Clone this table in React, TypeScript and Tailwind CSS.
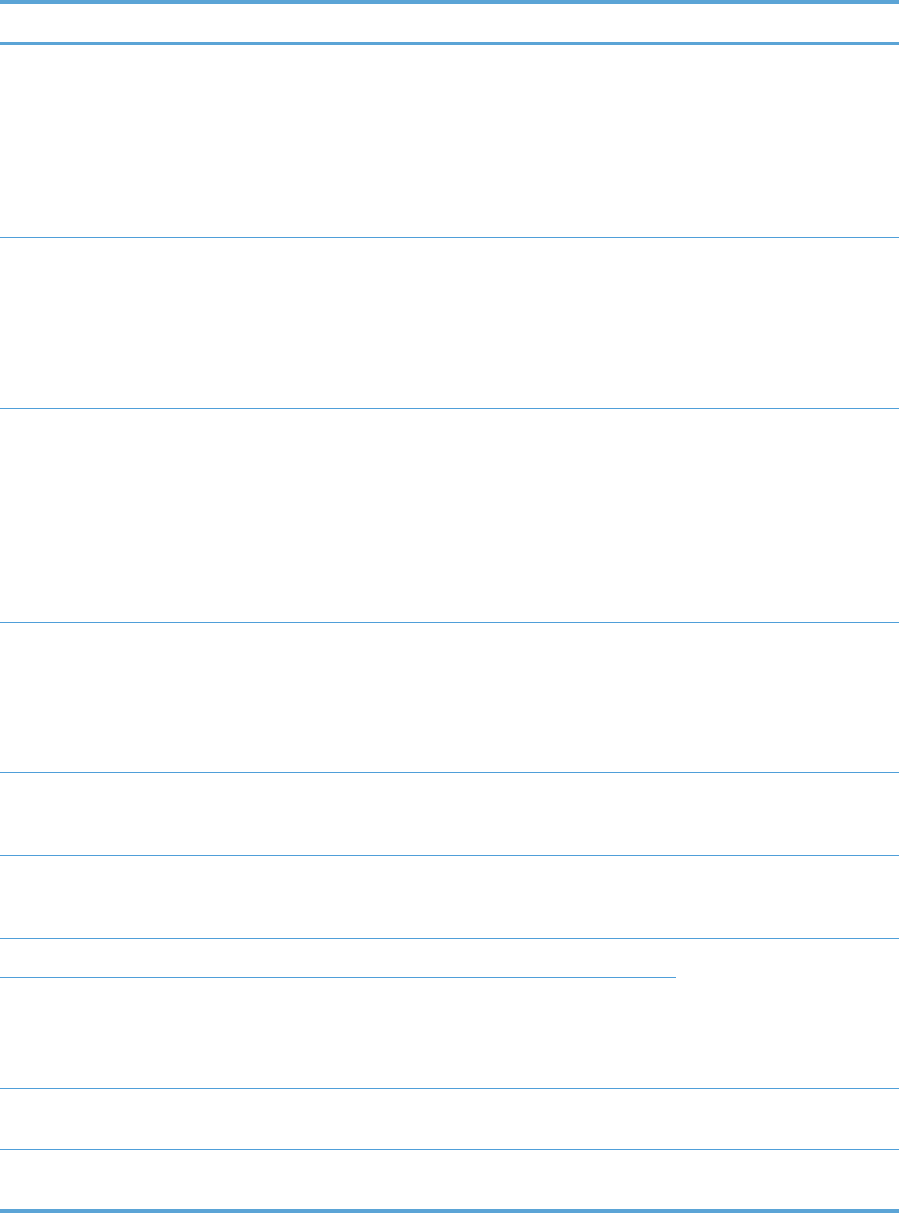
const rows = [
  { h: "h-[193px]" },
  { h: "h-[171px]" },
  { h: "h-[214px]" },
  { h: "h-[150px]" },
  { h: "h-[83px]" },
  { h: "h-[83px]" },
];

export default function App() {
  return (
    <div className="w-[899px] h-[1213px] bg-white font-['Liberation_Sans',sans-serif]">
      <div className="border-t-4 border-b-[3px] border-[#5ba4d6] h-[45px]" />
      {rows.map((r, i) => (
        <div key={i} className={`${r.h} border-b border-[#4f9fd9]`} />
      ))}
      <div className="h-[150px] border-b border-[#4f9fd9]">
        <div className="h-[38px]" />
        <div className="w-[676px] border-b border-[#4f9fd9]" />
      </div>
      <div className="h-[61px] border-b border-[#4f9fd9]" />
      <div className="h-[63px] border-b-4 border-[#5ba4d6]" />
    </div>
  );
}
